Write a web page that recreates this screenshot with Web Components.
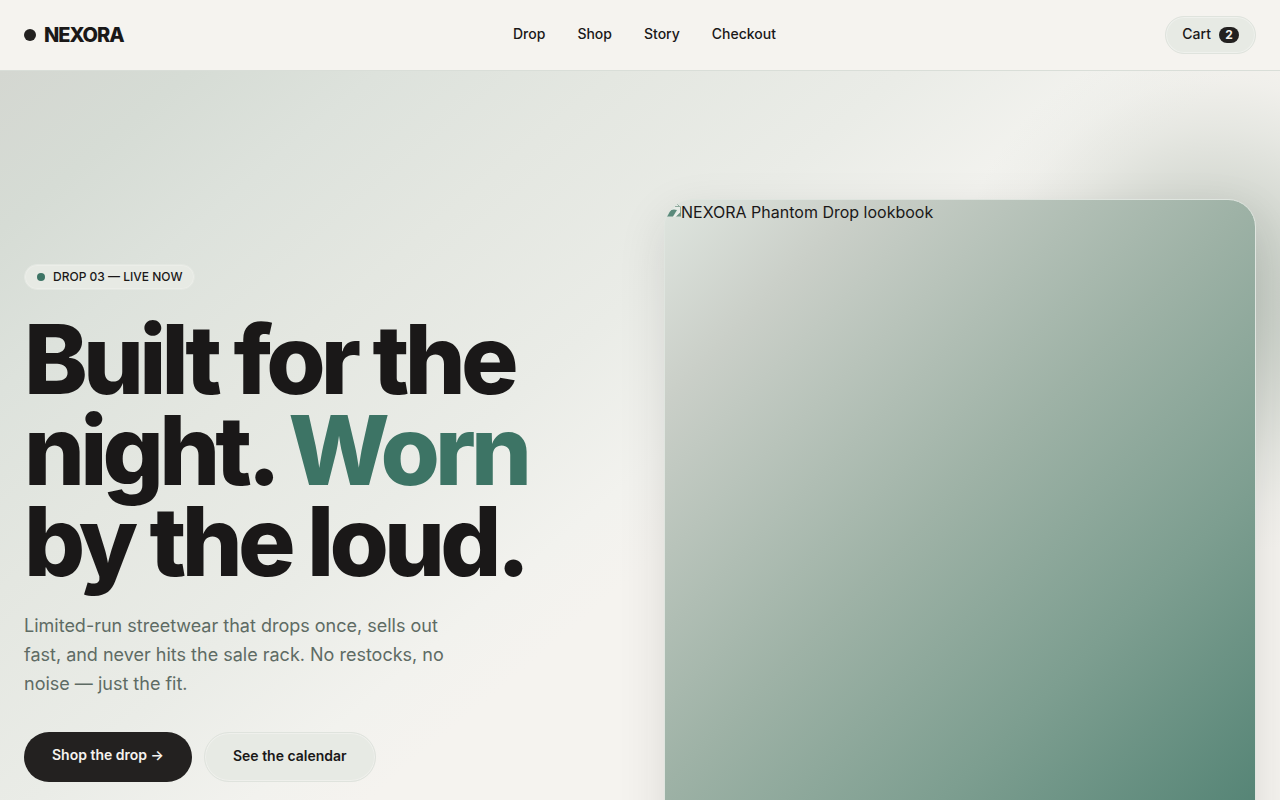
<!DOCTYPE html>
<html lang="en">
<head>
<meta charset="utf-8">
<meta name="viewport" content="width=device-width, initial-scale=1">
<title>NEXORA — Drop 03</title>
<style>
  :root {
    --ink: #1a1818;
    --charcoal: #232120;
    --paper: #f5f3ef;
    --mist: #e7eae4;
    --line: #d9ded8;
    --green: #3d7465;
    --muted: #5e6b64;
  }
  body {
    margin: 0;
    background: var(--paper);
    color: var(--ink);
    font: 16px/24px Inter, "Liberation Sans", sans-serif;
  }
</style>
</head>
<body>
<nx-header>
  <nx-logo slot="brand">NEXORA</nx-logo>
  <nx-navlink href="#drop">Drop</nx-navlink>
  <nx-navlink href="#shop">Shop</nx-navlink>
  <nx-navlink href="#story">Story</nx-navlink>
  <nx-navlink href="#checkout">Checkout</nx-navlink>
  <nx-cart slot="actions" count="2">Cart</nx-cart>
</nx-header>
<main>
  <nx-hero>
    <nx-badge slot="badge">DROP 03 — LIVE NOW</nx-badge>
    <span slot="title">Built for the night. <span style="color:var(--green)">Worn</span> by the loud.</span>
    <span slot="lead">Limited-run streetwear that drops once, sells out fast, and never hits the sale rack. No restocks, no noise — just the fit.</span>
    <nx-button slot="actions" variant="primary">Shop the drop →</nx-button>
    <nx-button slot="actions">See the calendar</nx-button>
    <nx-lookbook slot="media">NEXORA Phantom Drop lookbook</nx-lookbook>
  </nx-hero>
</main>
<script>
  const define = (name, html, setup) => {
    const template = document.createElement('template');
    template.innerHTML = html;
    customElements.define(name, class extends HTMLElement {
      constructor() {
        super();
        this.attachShadow({ mode: 'open' }).append(template.content.cloneNode(true));
      }
      connectedCallback() { if (setup) setup(this, this.shadowRoot); }
    });
  };

  define('nx-header', `
    <style>
      :host { display: block; background: var(--paper); border-bottom: 1px solid var(--line); }
      header { display: flex; justify-content: space-between; align-items: center; padding: 16px 24px; }
      nav { display: flex; gap: 32px; }
    </style>
    <header>
      <slot name="brand"></slot>
      <nav aria-label="Main"><slot></slot></nav>
      <slot name="actions"></slot>
    </header>`);

  define('nx-logo', `
    <style>
      :host { display: block; }
      a { display: flex; align-items: center; gap: 8px; color: inherit; text-decoration: none; font-size: 20px; line-height: 24px; font-weight: 800; letter-spacing: -1px; }
      i { width: 12px; height: 12px; border-radius: 50%; background: var(--charcoal); }
    </style>
    <a href="#top"><i></i><slot></slot></a>`);

  define('nx-navlink', `
    <style>
      :host { display: block; }
      a { display: block; padding-bottom: 2px; color: inherit; text-decoration: none; font-size: 14px; line-height: 22px; font-weight: 500; }
    </style>
    <a><slot></slot></a>`,
    (host, root) => root.querySelector('a').setAttribute('href', host.getAttribute('href')));

  define('nx-cart', `
    <style>
      :host { display: block; }
      button { display: flex; align-items: center; gap: 8px; height: 38px; padding: 0 16px; border: 1px solid #dfe3dd; border-radius: 19px; background: var(--mist); box-shadow: inset 0 0 0 1px #eff1ed; color: inherit; font: 500 14px/22px Inter, sans-serif; }
      .label { padding-bottom: 2px; }
      .count { box-sizing: border-box; width: 20px; border-radius: 8px; background: var(--charcoal); color: var(--paper); font-size: 12px; line-height: 16px; font-weight: 700; text-align: center; }
    </style>
    <button type="button"><span class="label"><slot></slot></span><span class="count"></span></button>`,
    (host, root) => root.querySelector('.count').textContent = host.getAttribute('count'));

  define('nx-hero', `
    <style>
      :host {
        display: block; overflow: hidden; padding: 128px 24px 56px;
        background:
          radial-gradient(circle 260px at calc(100% - 65px) 225px, #adb8aec0 0, #b6c0b6a8 25%, #c0c8bf88 45%, #ccd3cb5c 65%, #d9ded82c 83%, #e8ebe600 100%),
          linear-gradient(140deg, #d4d7d1 0, #d6dcd5 8%, #dde2dc 16%, #e4e7e1 26%, #eaece7 38%, #f2f2ee 47%, var(--paper) 52%);
      }
      section { display: grid; grid-template-columns: 1fr 1fr; gap: 48px; align-items: start; }
      .copy { display: flex; flex-direction: column; align-items: flex-start; padding-top: 65px; }
      h1 { margin: 24px 0; font-size: 96px; line-height: 91px; font-weight: 800; letter-spacing: -0.05em; }
      p { max-width: 440px; margin: 0 0 34px; color: var(--muted); font-size: 18px; line-height: 29px; }
      .actions { display: flex; gap: 12px; }
      @media (max-width: 800px) {
        section { grid-template-columns: 1fr; }
        .copy { padding-top: 0; }
        h1 { font-size: 64px; line-height: 61px; }
      }
    </style>
    <section>
      <div class="copy">
        <slot name="badge"></slot>
        <h1><slot name="title"></slot></h1>
        <p><slot name="lead"></slot></p>
        <div class="actions"><slot name="actions"></slot></div>
      </div>
      <slot name="media"></slot>
    </section>`);

  define('nx-badge', `
    <style>
      :host { display: flex; align-items: center; gap: 8px; padding: 4px 12px; border: 1px solid #e4e8e2; border-radius: 13px; background: #e7eae4; box-shadow: inset 0 0 0 1px #eceee9; font-size: 12px; line-height: 16px; font-weight: 500; }
      i { width: 8px; height: 8px; border-radius: 50%; background: var(--green); }
    </style>
    <i></i><span><slot></slot></span>`);

  define('nx-button', `
    <style>
      :host { display: block; }
      button { height: 50px; padding: 0 28px 2px; border: 1px solid #dfe3dd; border-radius: 25px; background: var(--mist); box-shadow: inset 0 0 0 1px #eff0ec; color: var(--ink); font: 600 14px/22px Inter, sans-serif; }
      :host([variant="primary"]) button { padding-bottom: 4px; border: 0; background: var(--charcoal); box-shadow: none; color: var(--paper); }
    </style>
    <button type="button"><slot></slot></button>`);

  define('nx-lookbook', `
    <style>
      :host {
        display: block; box-sizing: border-box; aspect-ratio: 4 / 5; overflow: hidden;
        border: 1px solid #dfe5df; border-radius: 28px;
        background: linear-gradient(135deg, #dfe5df, #cacfc8 15%, #9eb2a6 44%, #7d9e90 66%, #457a6b);
        box-shadow: 0 16px 48px #2321201f;
      }
      figure { display: flex; margin: 0; line-height: 24px; }
      svg { flex: none; width: 16px; height: 16px; margin-top: 2px; }
    </style>
    <figure>
      <svg viewBox="0 0 16 16" aria-hidden="true">
        <path d="M1 1h10l4 4v9H1z" fill="#e6ebe6"/>
        <path d="M11 1l4 4M10 4.500h5.500M15.500 5v5" stroke="#8fa99c" fill="none"/>
        <path d="M0 14.500C2 10 6 6 12 8L8 14.500z" fill="#5b8a7b"/>
        <path d="M11 14.500l5-5v5z" fill="#6f9586"/>
        <path d="M8 15l7-7v2l-5 5z" fill="#eef0ec"/>
      </svg>
      <figcaption><slot></slot></figcaption>
    </figure>`);
</script>
</body>
</html>
